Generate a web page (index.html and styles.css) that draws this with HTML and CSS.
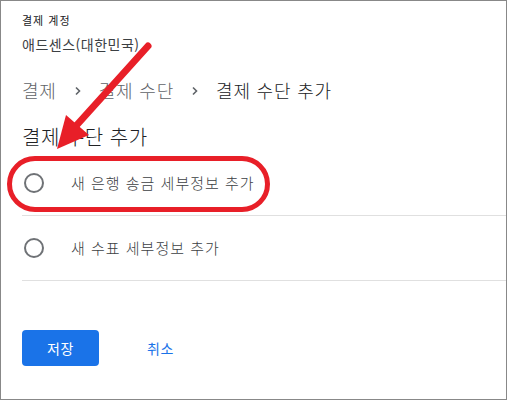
FILE: index.html
```html
<!DOCTYPE html>
<html lang="ko">
<head>
<meta charset="utf-8">
<link rel="stylesheet" href="styles.css">
</head>
<body>
<div class="frame">
  <div class="account">
    <div class="account-label">결제 계정</div>
    <div class="account-name">애드센스(대한민국)</div>
  </div>
  <nav class="crumbs">
    <span class="crumb">결제</span>
    <svg class="chev" width="6" height="10" viewBox="0 0 6 10"><path d="M1 1.5 L4.5 5 L1 8.5" fill="none" stroke="#5f6368" stroke-width="1.6"/></svg>
    <span class="crumb">결제 수단</span>
    <svg class="chev" width="6" height="10" viewBox="0 0 6 10"><path d="M1 1.5 L4.5 5 L1 8.5" fill="none" stroke="#5f6368" stroke-width="1.6"/></svg>
    <span class="crumb current">결제 수단 추가</span>
  </nav>
  <h1 class="title">결제 수단 추가</h1>
  <ul class="options">
    <li class="option"><span class="radio"></span><span class="opt-text">새 은행 송금 세부정보 추가</span></li>
    <li class="option"><span class="radio"></span><span class="opt-text">새 수표 세부정보 추가</span></li>
  </ul>
  <div class="actions">
    <button class="btn primary">저장</button>
    <button class="btn text">취소</button>
  </div>
  <svg class="annot" width="507" height="400" viewBox="0 0 507 400">
    <line x1="148" y1="46" x2="75" y2="127" stroke="#e81f28" stroke-width="7" stroke-linecap="round"/>
    <polygon points="57,149 66,115 89,135" fill="#e81f28"/>
    <rect x="9.5" y="158.5" width="258" height="51" rx="25.5" fill="none" stroke="#e81f28" stroke-width="5"/>
  </svg>
</div>
</body>
</html>
```

FILE: styles.css
```css
* { box-sizing: border-box; }
html, body { margin: 0; padding: 0; background: #fff; }
body {
  font-family: "Noto Sans CJK KR", "Noto Sans", sans-serif;
  font-weight: 300;
  color: #202124;
}
.frame {
  position: relative;
  width: 507px;
  height: 400px;
  border: 1px solid #888;
  padding: 11px 0 0 21px;
  overflow: hidden;
}
.account-label {
  font-size: 11px;
  line-height: 16px;
  letter-spacing: 1px;
  color: #202124;
  font-weight: 400;
}
.account-name {
  margin-top: 6px;
  font-size: 14px;
  line-height: 20px;
  letter-spacing: 0.5px;
  color: #3c4043;
  font-weight: 400;
}
.crumbs {
  margin-top: 24px;
  display: flex;
  align-items: center;
  font-size: 18px;
  line-height: 24px;
  letter-spacing: 0.8px;
}
.crumb { color: #5f6368; }
.crumb.current { color: #202124; }
.chev { margin: 2px 18px 0 18px; }
.title {
  margin: 21px 0 0 0;
  font-size: 20px;
  line-height: 28px;
  font-weight: 300;
  letter-spacing: 0.5px;
  color: #202124;
}
.options {
  list-style: none;
  margin: 0;
  padding: 0;
}
.option {
  display: flex;
  align-items: center;
  height: 65px;
  border-bottom: 1px solid #e0e0e0;
}
.radio {
  width: 20px;
  height: 20px;
  border: 2px solid #6f7276;
  border-radius: 50%;
  margin-left: 2px;
  flex: none;
}
.opt-text {
  margin-left: 27px;
  font-size: 15px;
  line-height: 20px;
  letter-spacing: 1px;
  color: #3c4043;
}
.actions {
  margin-top: 49px;
  display: flex;
  align-items: center;
}
.btn {
  font-family: inherit;
  font-size: 14px;
  border: none;
  background: none;
  padding: 0;
  cursor: pointer;
  font-weight: 400;
  letter-spacing: 0.5px;
}
.btn.primary {
  width: 77px;
  height: 36px;
  background: #1a73e8;
  color: #fff;
  border-radius: 4px;
}
.btn.text {
  margin-left: 24px;
  padding: 0 24px;
  height: 36px;
  color: #1a73e8;
}
.annot {
  position: absolute;
  left: -1px;
  top: -1px;
  pointer-events: none;
}
```
